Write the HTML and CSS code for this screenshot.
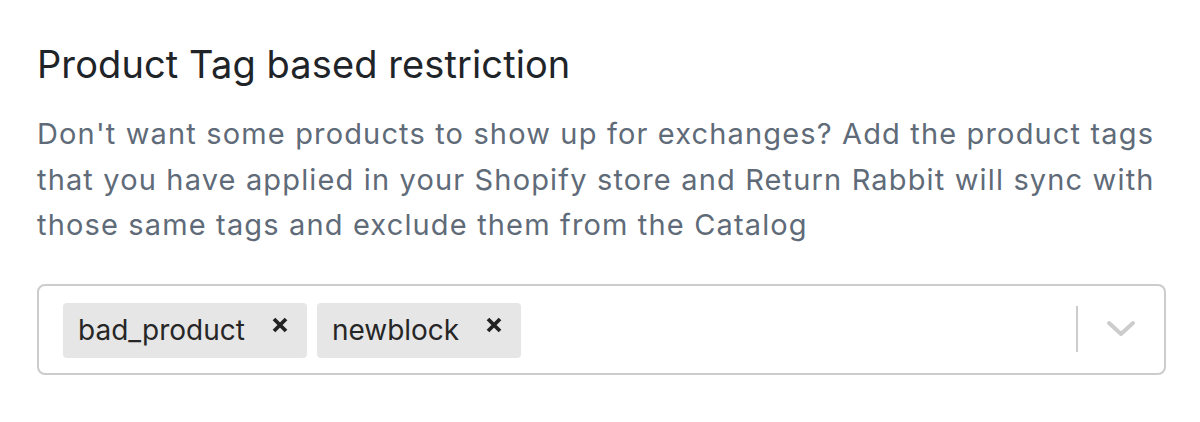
FILE: index.html
```html
<!DOCTYPE html>
<html>
<head>
<meta charset="utf-8">
<link rel="stylesheet" href="styles.css">
</head>
<body>
<div class="section">
  <h2 class="title">Product Tag based restriction</h2>
  <p class="desc">Don't want some products to show up for exchanges? Add the product tags that you have applied in your Shopify store and Return Rabbit will sync with those same tags and exclude them from the Catalog</p>
  <div class="select">
    <div class="values">
      <div class="tag"><span class="tag-label">bad_product</span><span class="tag-remove"><svg width="18" height="18" viewBox="0 0 18 18"><path d="M3 3L15 15M15 3L3 15" stroke="#222" stroke-width="3.8" stroke-linecap="butt"/></svg></span></div>
      <div class="tag"><span class="tag-label">newblock</span><span class="tag-remove"><svg width="18" height="18" viewBox="0 0 18 18"><path d="M3 3L15 15M15 3L3 15" stroke="#222" stroke-width="3.8" stroke-linecap="butt"/></svg></span></div>
    </div>
    <div class="indicators">
      <span class="sep"></span>
      <span class="chevron"><svg width="30" height="18" viewBox="0 0 30 18"><path d="M3 3L15 14L27 3" fill="none" stroke="#cccccc" stroke-width="4" stroke-linecap="round" stroke-linejoin="round"/></svg></span>
    </div>
  </div>
</div>
</body>
</html>
```
FILE: styles.css
```css
html, body {
  margin: 0;
  padding: 0;
  background: #ffffff;
}
body {
  font-family: Inter, "Liberation Sans", sans-serif;
}
.section {
  padding: 40px 20px 0 37px;
}
.title {
  margin: 0;
  font-size: 38px;
  font-weight: 400;
  line-height: 48px;
  letter-spacing: 0.1px;
  color: #1f2429;
}
.desc {
  margin: 23px 0 0 0;
  font-size: 29px;
  line-height: 45.5px;
  letter-spacing: 1.15px;
  color: #5f6b78;
}
.select {
  margin-top: 36px;
  border: 2px solid #cccccc;
  border-radius: 8px;
  height: 91px;
  box-sizing: border-box;
  width: 1129px;
  display: flex;
  align-items: center;
  justify-content: space-between;
}
.values {
  display: flex;
  gap: 10px;
  padding-left: 24px;
  padding-top: 2px;
}
.tag {
  display: flex;
  align-items: center;
  background: #e6e6e6;
  border-radius: 4px;
  height: 55px;
}
.tag-label {
  font-size: 28px;
  color: #262626;
  padding: 0 26px 0 15px;
  line-height: 55px;
}
.tag-remove {
  display: flex;
  align-items: center;
  padding: 0 18px 10px 0;
}
.indicators {
  display: flex;
  align-items: center;
  height: 100%;
}
.sep {
  width: 2px;
  height: 46px;
  background: #cccccc;
}
.chevron {
  display: flex;
  align-items: center;
  padding: 0 28px 0 28px;
}
```
